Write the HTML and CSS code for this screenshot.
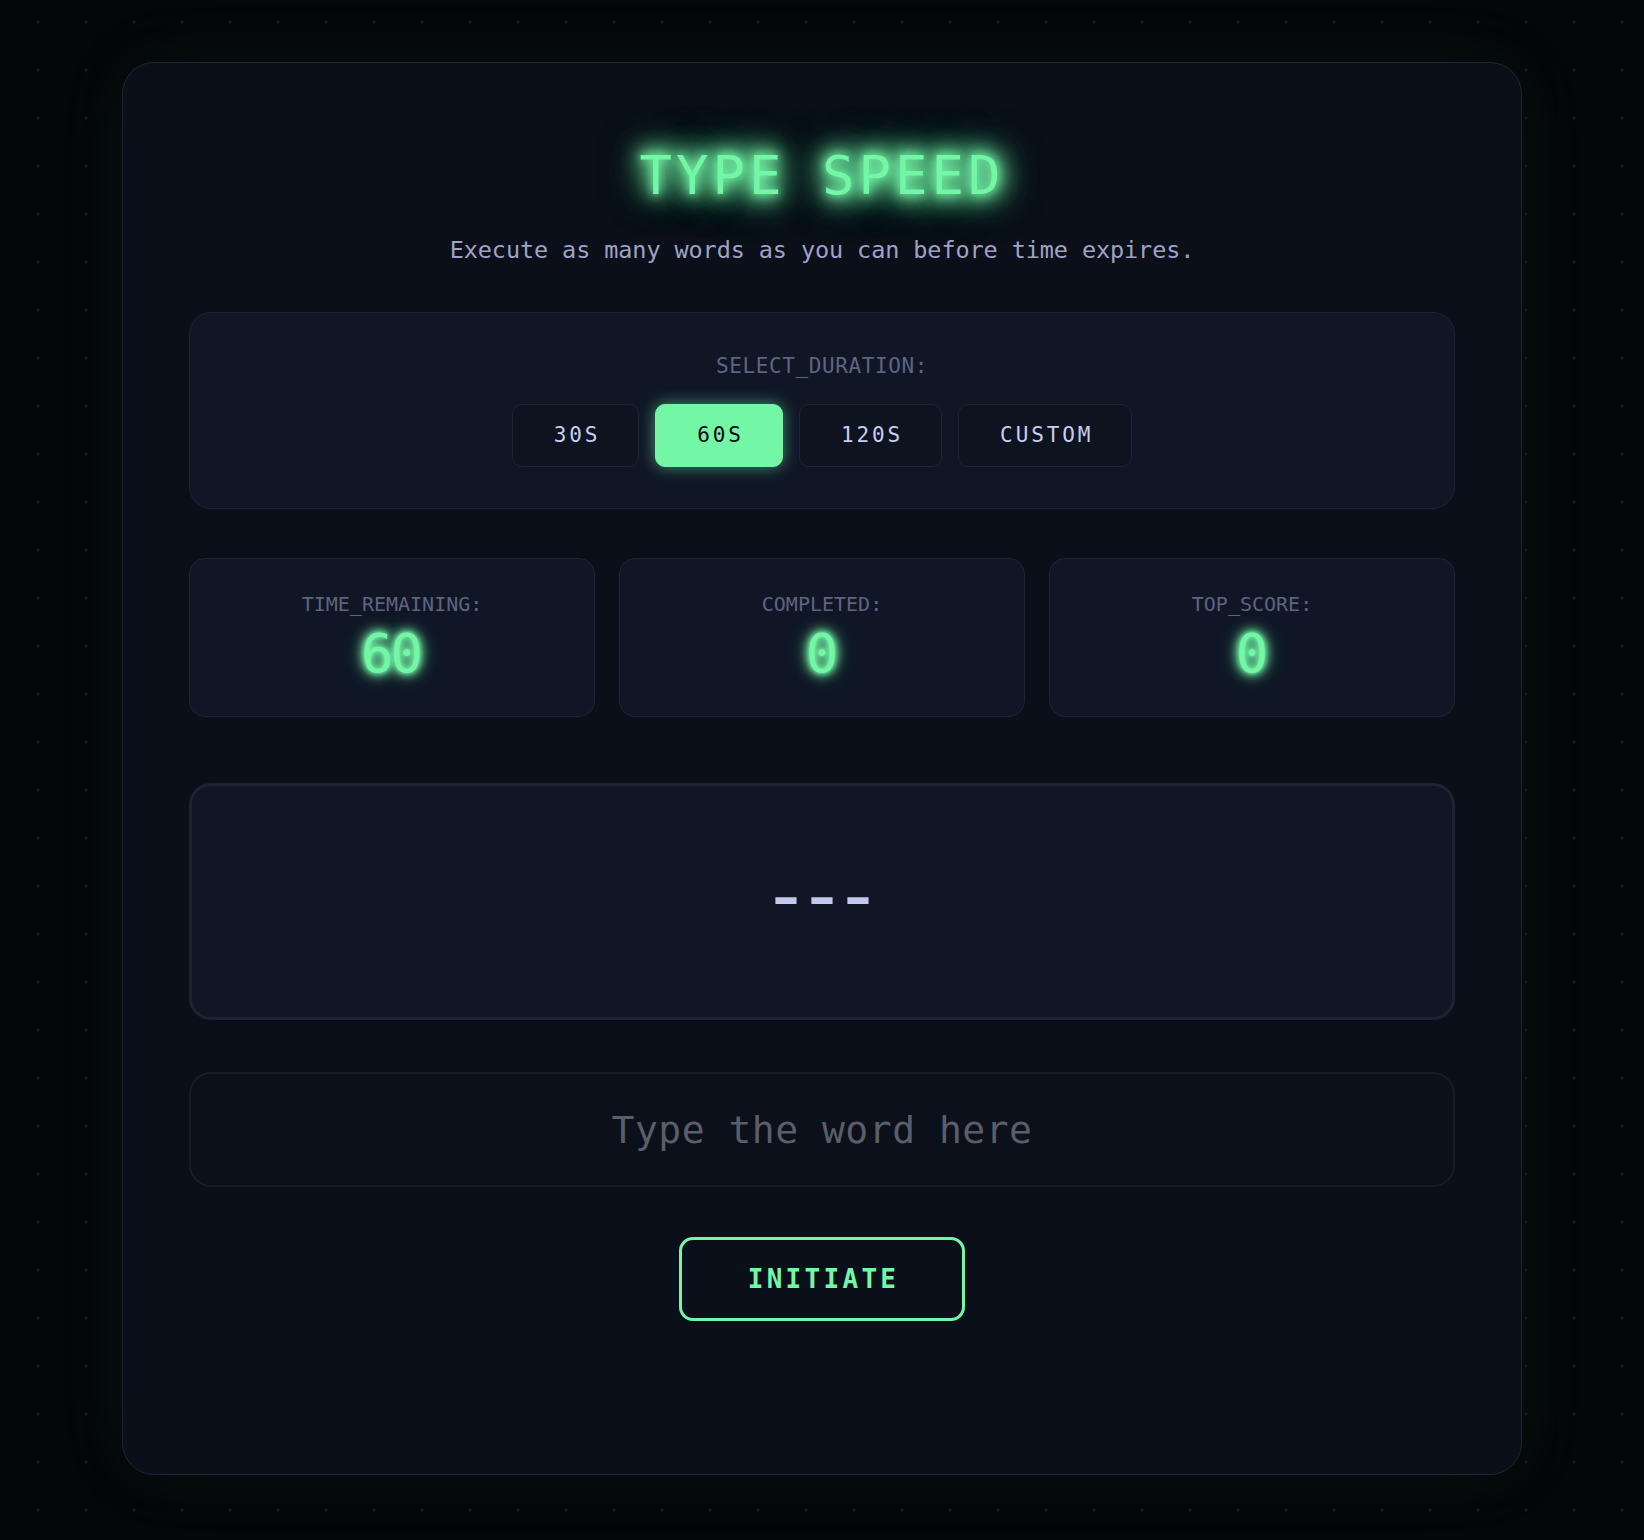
FILE: index.html
```html
<!DOCTYPE html>
<html lang="en">
<head>
<meta charset="utf-8">
<title>Type Speed</title>
<link rel="stylesheet" href="styles.css">
</head>
<body>
<main class="card">
  <h1 class="title">TYPE SPEED</h1>
  <p class="subtitle">Execute as many words as you can before time expires.</p>

  <section class="duration">
    <div class="duration-label">SELECT_DURATION:</div>
    <div class="options">
      <button class="opt">30S</button>
      <button class="opt active">60S</button>
      <button class="opt">120S</button>
      <button class="opt">CUSTOM</button>
    </div>
  </section>

  <section class="stats">
    <div class="stat">
      <div class="stat-label">TIME_REMAINING:</div>
      <div class="stat-value">60</div>
    </div>
    <div class="stat">
      <div class="stat-label">COMPLETED:</div>
      <div class="stat-value">0</div>
    </div>
    <div class="stat">
      <div class="stat-label">TOP_SCORE:</div>
      <div class="stat-value">0</div>
    </div>
  </section>

  <div class="word">---</div>

  <input class="entry" type="text" placeholder="Type the word here">

  <button class="start">INITIATE</button>
</main>
</body>
</html>
```

FILE: styles.css
```css
html, body {
  margin: 0;
  padding: 0;
}

body {
  min-height: 100vh;
  background-color: #04060a;
  background-image: radial-gradient(circle at center, #171a21 0, #171a21 1.2px, transparent 1.8px);
  background-size: 48px 48px;
  background-position: 14px -2px;
  font-family: "DejaVu Sans Mono", "Liberation Mono", monospace;
  overflow: hidden;
}

.card {
  box-sizing: border-box;
  width: 1400px;
  margin: 62px auto 0;
  padding: 81px 66px 153px;
  background: #0b0f19;
  border: 1px solid #1e2433;
  border-radius: 32px;
  box-shadow: 0 0 70px rgba(116, 246, 167, 0.08), 0 0 30px rgba(0, 0, 0, 0.6);
}

.title {
  margin: 0;
  text-align: center;
  font-size: 54px;
  line-height: 64px;
  font-weight: normal;
  letter-spacing: 4px;
  color: #74f6a7;
  text-shadow:
    0 0 8px #74f6a7,
    0 0 16px #74f6a7,
    0 0 24px #74f6a7,
    0 0 24px rgba(116, 246, 167, 0.9),
    0 0 32px rgba(116, 246, 167, 0.9),
    0 0 40px rgba(116, 246, 167, 0.7),
    0 0 48px rgba(116, 246, 167, 0.5),
    0 0 64px rgba(116, 246, 167, 0.4);
}

.subtitle {
  margin: 26px 0 0;
  text-align: center;
  font-size: 23.5px;
  line-height: 32px;
  letter-spacing: -0.1px;
  color: #9ea3c6;
}

.duration {
  margin-top: 46px;
  padding: 41px 0 41px;
  background: #101626;
  border: 1px solid #1d2332;
  border-radius: 22px;
  text-align: center;
}

.duration-label {
  font-size: 21px;
  line-height: 24px;
  letter-spacing: 0.6px;
  color: #5d6580;
}

.options {
  display: flex;
  justify-content: center;
  gap: 16px;
  margin-top: 26px;
}

.opt {
  font-family: inherit;
  font-size: 21px;
  line-height: 25px;
  letter-spacing: 2.9px;
  padding: 18px 38px 18px 41px;
  background: #0e1320;
  color: #c8cdf0;
  border: 1px solid #1e2433;
  border-radius: 10px;
}

.opt.active {
  background: #74f6a7;
  border-color: #74f6a7;
  color: #07090c;
  box-shadow: 0 0 16px rgba(116, 246, 167, 0.55);
}

.stats {
  display: grid;
  grid-template-columns: repeat(3, 1fr);
  gap: 24px;
  margin-top: 49px;
}

.stat {
  padding: 33px 0 32px;
  background: #101626;
  border: 1px solid #1e2433;
  border-radius: 16px;
  text-align: center;
}

.stat-label {
  font-size: 20px;
  line-height: 24px;
  color: #5d6580;
}

.stat-value {
  margin-top: 8px;
  font-size: 54px;
  line-height: 60px;
  letter-spacing: -3px;
  text-indent: -3px;
  color: #74f6a7;
  text-shadow:
    0 0 4px #74f6a7,
    0 0 8px #74f6a7,
    0 0 12px rgba(116, 246, 167, 0.9),
    0 0 16px rgba(116, 246, 167, 0.7),
    0 0 24px rgba(116, 246, 167, 0.4);
}

.word {
  box-sizing: border-box;
  height: 237px;
  margin-top: 66px;
  padding-bottom: 13px;
  display: flex;
  align-items: center;
  justify-content: center;
  background: #101626;
  border: 3px solid #1e2332;
  border-radius: 22px;
  font-size: 83px;
  line-height: 83px;
  letter-spacing: -14px;
  text-indent: -14px;
  color: #c3c8ec;
}

.entry {
  display: block;
  box-sizing: border-box;
  width: 100%;
  height: 115px;
  margin-top: 52px;
  padding: 0 20px;
  background: #0c101a;
  border: 2px solid #171c28;
  border-radius: 22px;
  outline: none;
  font-family: inherit;
  font-size: 38px;
  letter-spacing: 0.5px;
  text-align: center;
  color: #c8cdf0;
}

.entry::placeholder {
  color: #5a5e6b;
  opacity: 1;
}

.start {
  display: block;
  margin: 50px auto 0;
  padding: 24px 63px 24px 66px;
  background: transparent;
  border: 3px solid #74f6a7;
  border-radius: 14px;
  font-family: inherit;
  font-weight: bold;
  font-size: 26px;
  line-height: 30px;
  letter-spacing: 3.3px;
  color: #74f6a7;
}
```
